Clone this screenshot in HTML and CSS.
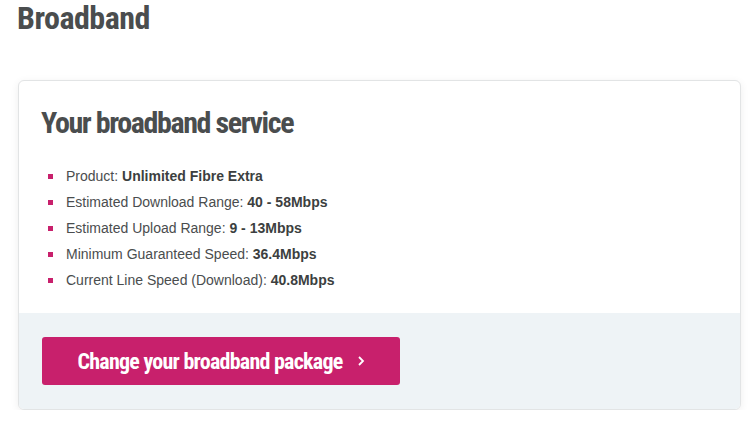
FILE: index.html
```html
<!DOCTYPE html>
<html>
<head>
<meta charset="utf-8">
<link rel="stylesheet" href="styles.css">
</head>
<body>
<main class="page">
  <h1 class="page-title">Broadband</h1>
  <section class="card">
    <div class="card-body">
      <h2 class="card-title">Your broadband service</h2>
      <ul class="details">
        <li>Product: <b>Unlimited Fibre Extra</b></li>
        <li>Estimated Download Range: <b>40 - 58Mbps</b></li>
        <li>Estimated Upload Range: <b>9 - 13Mbps</b></li>
        <li>Minimum Guaranteed Speed: <b>36.4Mbps</b></li>
        <li>Current Line Speed (Download): <b>40.8Mbps</b></li>
      </ul>
    </div>
    <div class="card-footer">
      <a class="btn" href="#"><span>Change your broadband package</span>
        <svg class="chev" width="8" height="12" viewBox="0 0 8 12"><path d="M2 2 L6 6 L2 10" fill="none" stroke="#fff" stroke-width="1.8"/></svg>
      </a>
    </div>
  </section>
</main>
</body>
</html>
```
FILE: styles.css
```css
* { box-sizing: border-box; }
html, body { margin: 0; padding: 0; background: #fff; }
body { font-family: "Liberation Sans", Arial, sans-serif; color: #4a4d4e; }
.page { padding: 0 10px 0 17px; }
.page-title {
  margin: 0;
  font-family: "Roboto Condensed", "Roboto", sans-serif;
  font-stretch: 75%;
  font-weight: 700;
  font-size: 32px;
  line-height: 36px;
  letter-spacing: -0.5px;
  color: #4a4d4e;
}
.card {
  margin-top: 44px;
  margin-left: 1px;
  width: 723px;
  background: #fff;
  border: 1px solid #e2e4e5;
  border-radius: 6px;
  box-shadow: 0 2px 8px rgba(0,0,0,0.07);
  overflow: hidden;
}
.card-body { padding: 22px 22px 20px 22px; }
.card-title {
  margin: 0;
  font-family: "Roboto Condensed", "Roboto", sans-serif;
  font-stretch: 75%;
  font-weight: 700;
  font-size: 30px;
  line-height: 40px;
  letter-spacing: -1.4px;
  color: #4a4d4e;
}
.details { list-style: none; margin: 20px 0 0 0; padding: 0 0 0 7px; }
.details li {
  position: relative;
  padding-left: 18px;
  font-size: 14px;
  line-height: 26px;
  color: #4a4d4e;
}
.details li::before {
  content: "";
  position: absolute;
  left: 0;
  top: 11px;
  width: 5px;
  height: 5px;
  background: #c8206c;
}
.details b { font-weight: 700; color: #3c3f40; }
.card-footer { background: #eef3f6; padding: 24px 23px; }
.btn {
  display: flex;
  align-items: center;
  justify-content: center;
  gap: 14px;
  width: 358px;
  height: 48px;
  background: #c8206c;
  border-radius: 3px;
  color: #fff;
  text-decoration: none;
  font-family: "Roboto Condensed", "Roboto", sans-serif;
  font-stretch: 75%;
  font-weight: 700;
  font-size: 22px;
  letter-spacing: -0.75px;
}
.chev { display: block; }
```
